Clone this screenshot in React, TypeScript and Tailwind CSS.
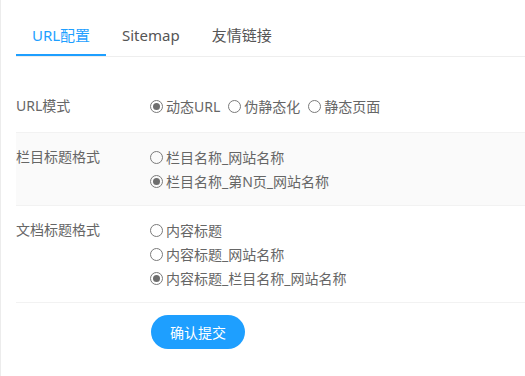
import React from "react";

const font = { fontFamily: '"Noto Sans", "Noto Sans CJK SC", sans-serif' };

function Radio({ label, checked }: { label: string; checked?: boolean }) {
  return (
    <label className="flex items-center h-6 mr-2 text-[14px] text-[#666] whitespace-nowrap">
      <span className="w-[13px] h-[13px] rounded-full border border-[#7a7a7a] flex items-center justify-center mr-[3px]">
        {checked && <span className="w-[7px] h-[7px] rounded-full bg-[#6e6e6e]" />}
      </span>
      {label}
    </label>
  );
}

function Row({
  label,
  children,
  className = "",
}: {
  label: string;
  children: React.ReactNode;
  className?: string;
}) {
  return (
    <div className={`flex ${className}`}>
      <div className="w-[134px] h-6 leading-6 text-[14px] text-[#666]">{label}</div>
      <div>{children}</div>
    </div>
  );
}

export default function App() {
  const tabs = ["URL配置", "Sitemap", "友情链接"];
  return (
    <div className="w-[525px] h-[376px] bg-white border-l border-[#ececec] overflow-hidden" style={font}>
      <div className="pl-[15px] pt-[22px]">
        {/* tabs */}
        <div className="flex border-b border-[#eeeeee] h-[35px]">
          {tabs.map((t, i) =>
            i === 0 ? (
              <div
                key={t}
                className="w-[90px] text-center whitespace-nowrap text-[15px] leading-[26px] text-[#1e9fff] border-b-2 border-[#1e9fff]"
              >
                {t}
              </div>
            ) : (
              <div key={t} className="px-[16px] whitespace-nowrap text-[15px] leading-[26px] text-[#555]">
                {t}
              </div>
            )
          )}
        </div>

        <div className="mt-[25px]">
          <Row label="URL模式" className="pt-[12px] pb-[14px]">
            <div className="flex">
              <Radio label="动态URL" checked />
              <Radio label="伪静态化" />
              <Radio label="静态页面" />
            </div>
          </Row>
          <Row label="栏目标题格式" className="py-[12px] bg-[#fafafa] border-y border-[#f2f2f2]">
            <Radio label="栏目名称_网站名称" />
            <Radio label="栏目名称_第N页_网站名称" checked />
          </Row>
          <Row label="文档标题格式" className="py-[12px] border-b border-[#f2f2f2]">
            <Radio label="内容标题" />
            <Radio label="内容标题_网站名称" />
            <Radio label="内容标题_栏目名称_网站名称" checked />
          </Row>
          <div className="pl-[135px] pt-[12px]">
            <button className="w-[94px] h-[34px] rounded-full bg-[#1e9fff] text-white text-[14px]">
              确认提交
            </button>
          </div>
        </div>
      </div>
    </div>
  );
}
